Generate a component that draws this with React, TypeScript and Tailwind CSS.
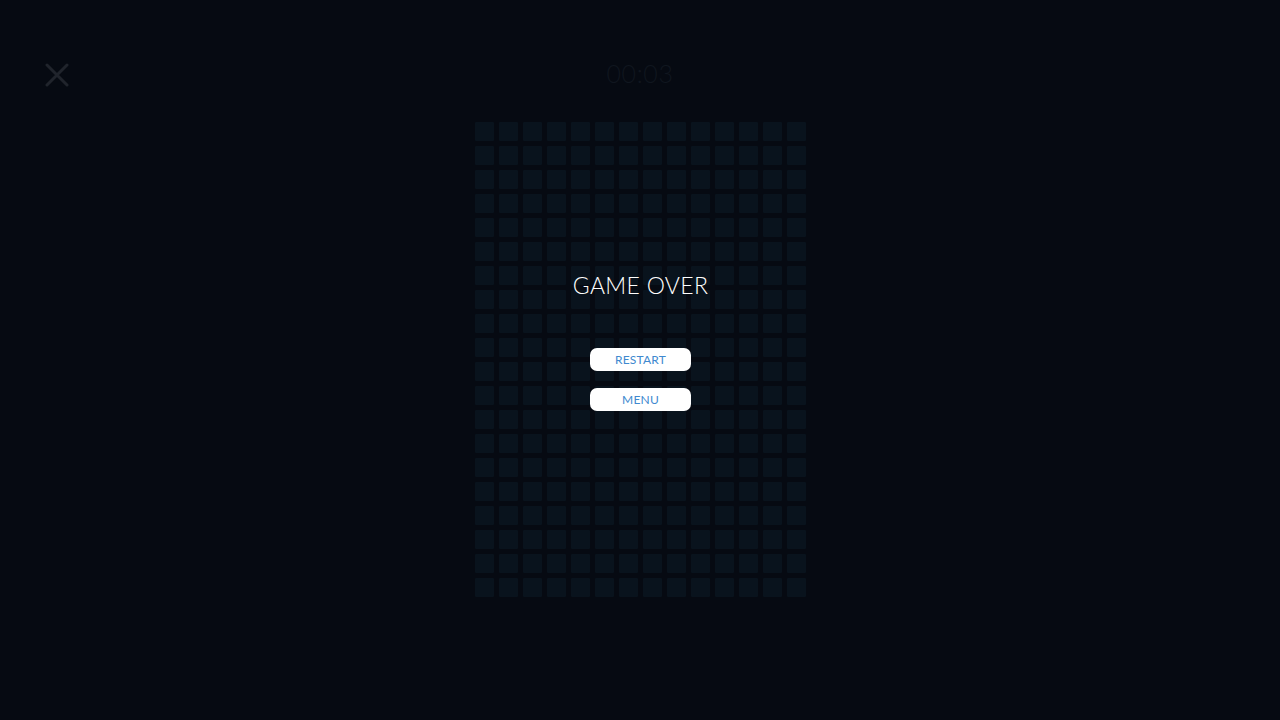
const COLS = 14;
const ROWS = 20;

function Board() {
  const cells = Array.from({ length: COLS * ROWS });
  return (
    <div className="grid grid-cols-[repeat(14,19px)] grid-rows-[repeat(20,19px)] gap-[5px]">
      {cells.map((_, i) => (
        <div key={i} className="rounded-[1px] bg-[#09131d]" />
      ))}
    </div>
  );
}

export default function App() {
  return (
    <div
      className="relative w-[1280px] h-[720px] overflow-hidden bg-[#060a12] text-white"
      style={{ fontFamily: 'Lato, "Noto Sans", sans-serif' }}
    >
      <div className="flex items-start h-[122px]">
        <button className="mt-[63px] ml-[45px] text-[#20242c]" aria-label="Close">
          <svg width="24" height="24" viewBox="0 0 24 24" fill="none" stroke="currentColor" strokeWidth="3" strokeLinecap="round">
            <path d="M2 2 L22 22 M22 2 L2 22" />
          </svg>
        </button>
        <div className="absolute left-0 right-0 top-[55px] text-center text-[25px] font-light text-[#10161f] tracking-wide">
          00:03
        </div>
      </div>

      <div className="flex justify-center">
        <div className="relative ml-[1px]">
          <Board />
          <div className="absolute inset-0 flex flex-col items-center">
            <h1 className="mt-[148px] text-[23px] leading-[30px] font-light tracking-[0.3px] text-white">GAME OVER</h1>
            <button className="mt-[48px] w-[101px] h-[23px] rounded-[7px] bg-white text-[#4089cf] text-[12px] leading-[23px] tracking-[0.2px]">
              RESTART
            </button>
            <button className="mt-[17px] w-[101px] h-[23px] rounded-[7px] bg-white text-[#4089cf] text-[12px] leading-[23px] tracking-[0.2px]">
              MENU
            </button>
          </div>
        </div>
      </div>
    </div>
  );
}
